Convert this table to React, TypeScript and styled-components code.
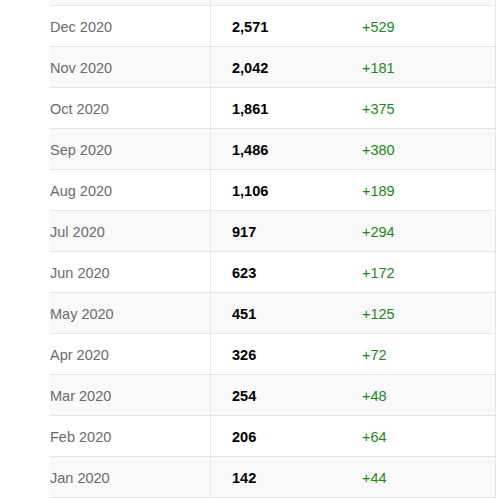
import React from 'react'
import styled, { createGlobalStyle } from 'styled-components'

const GlobalStyle = createGlobalStyle`
  body {
    margin: 0;
    background: #fff;
    font-family: 'Liberation Sans', Arial, sans-serif;
  }
`

const Page = styled.div`
  padding-left: 50px;
  height: 500px;
  overflow: hidden;
`

const Table = styled.div`
  width: 446px;
  display: flex;
  flex-direction: column;
`

const Row = styled.div<{ $striped: boolean; $height?: number }>`
  display: grid;
  grid-template-columns: 160px 131px 155px;
  height: ${(p) => p.$height ?? 41}px;
  box-sizing: border-box;
  border-bottom: 1px solid #e6e6e6;
  background: ${(p) => (p.$striped ? '#f9f9f9' : '#ffffff')};
`

const Cell = styled.div`
  display: flex;
  align-items: center;
  box-sizing: border-box;
  padding-top: 2px;
  font-size: 14.5px;
  white-space: nowrap;
`

const MonthCell = styled(Cell)`
  color: #6b6b6b;
`

const TotalCell = styled(Cell)`
  border-left: 1px solid #e6e6e6;
  padding-left: 21px;
  font-weight: 700;
  color: #000;
`

const ChangeCell = styled(Cell)`
  border-right: 1px solid #e6e6e6;
  padding-left: 21px;
  color: #1a8917;
`

const rows = [
  ['Dec 2020', '2,571', '+529'],
  ['Nov 2020', '2,042', '+181'],
  ['Oct 2020', '1,861', '+375'],
  ['Sep 2020', '1,486', '+380'],
  ['Aug 2020', '1,106', '+189'],
  ['Jul 2020', '917', '+294'],
  ['Jun 2020', '623', '+172'],
  ['May 2020', '451', '+125'],
  ['Apr 2020', '326', '+72'],
  ['Mar 2020', '254', '+48'],
  ['Feb 2020', '206', '+64'],
  ['Jan 2020', '142', '+44'],
]

export default function App() {
  return (
    <>
      <GlobalStyle />
      <Page>
        <Table>
          {/* tail of the row above, scrolled out of view */}
          <Row $striped $height={6}>
            <MonthCell />
            <TotalCell />
            <ChangeCell />
          </Row>
          {rows.map(([month, total, change], index) => (
            <Row key={month} $striped={index % 2 === 1}>
              <MonthCell>{month}</MonthCell>
              <TotalCell>{total}</TotalCell>
              <ChangeCell>{change}</ChangeCell>
            </Row>
          ))}
        </Table>
      </Page>
    </>
  )
}
